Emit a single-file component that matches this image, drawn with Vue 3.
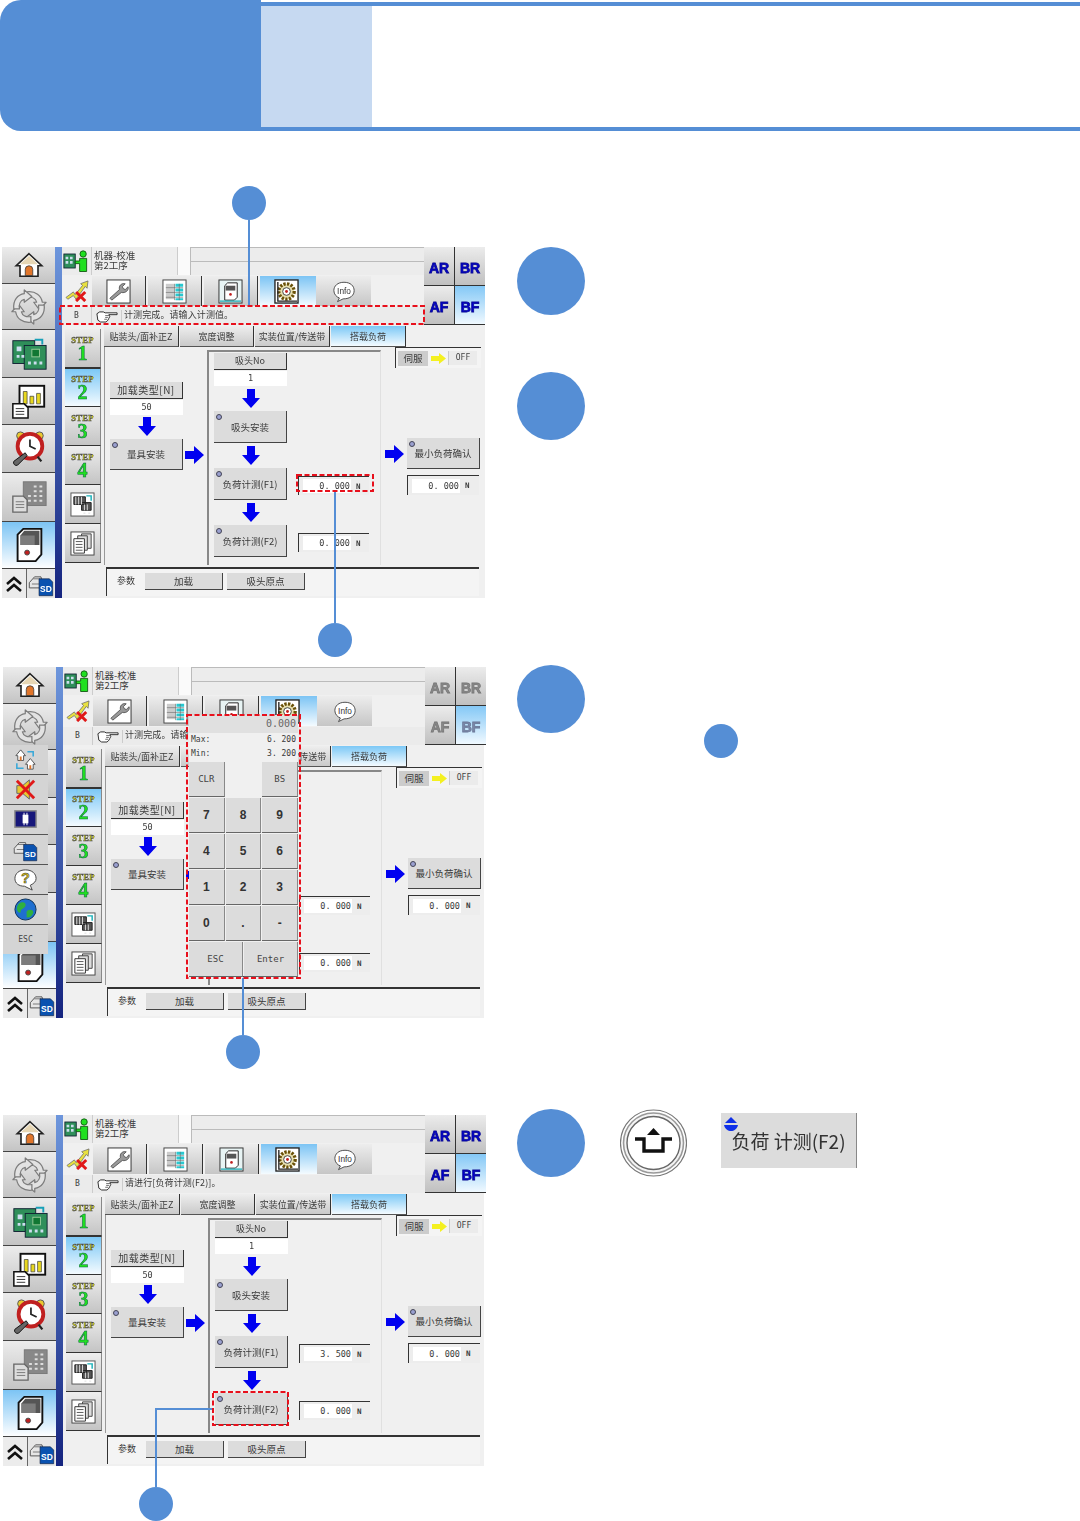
<script setup>
const sideIcons = ['home', 'cycle', 'pcb', 'chart', 'clock', 'grid', 'machine']
const tabs = ['贴装头/面补正Z', '宽度调整', '实装位置/传送带', '搭载负荷']
const steps = [1, 2, 3, 4]
const keys = ['7', '8', '9', '4', '5', '6', '1', '2', '3', '0', '.', '-']
const popup = ['swap', 'mute', 'chip', 'sd', 'help', 'globe']

const screens = [
  { id: 1, msg: '计测完成。请输入计测值。', f1: '0. 000', dim: false, pad: false },
  { id: 2, msg: '计测完成。请输入计测值。', f1: '0. 000', dim: true, pad: true },
  { id: 3, msg: '请进行[负荷计测(F2)]。', f1: '3. 500', dim: false, pad: false },
]

// callouts sit over the whole page, in page coordinates
const dots = [
  [249, 203], [335, 640], [243, 1052], [156, 1504],
]
const leads = [
  'M249 220V306', 'M335 491V623', 'M243 978V1035', 'M213 1409H156V1487',
]
const marks = [
  [60, 306, 364, 18], [297, 475, 76, 16], [187, 715, 113, 263], [213, 1392, 75, 33],
]
</script>

<template>
  <div class="page">
    <svg class="defs" width="0" height="0">
      <defs>
        <symbol id="i-home" viewBox="0 0 40 40">
          <path d="M20 5 37 21H32V35H8V21H3Z" fill="#fff" stroke="#222" stroke-width="2.2" />
          <path d="M20 8 32 19H8Z" fill="#e6d6b4" />
          <path d="M15 34V26a5 5 0 0 1 10 0v8z" fill="#e0752a" stroke="#333" />
        </symbol>
        <symbol id="i-cycle" viewBox="0 0 40 40">
          <g fill="#e2e2e2" stroke="#7c7c7c" stroke-width="1.3" stroke-linejoin="round">
            <path d="M18 4C27 3 33 8 34 15H38L31 23 25 15H28C27 11 23 9 18 10Z" />
            <path d="M18 4C27 3 33 8 34 15H38L31 23 25 15H28C27 11 23 9 18 10Z" transform="rotate(90 20 20)" />
            <path d="M18 4C27 3 33 8 34 15H38L31 23 25 15H28C27 11 23 9 18 10Z" transform="rotate(180 20 20)" />
            <path d="M18 4C27 3 33 8 34 15H38L31 23 25 15H28C27 11 23 9 18 10Z" transform="rotate(270 20 20)" />
          </g>
        </symbol>
        <symbol id="i-pcb" viewBox="0 0 40 40">
          <path d="M26 5H34V10" fill="none" stroke="#18a0b8" stroke-width="2" />
          <rect x="3" y="6" width="23" height="24" fill="#2f8f5a" stroke="#123" />
          <rect x="15" y="11" width="23" height="25" fill="#2f8f5a" stroke="#123" />
          <rect x="23" y="15" width="8" height="8" fill="#173" stroke="#9c9" />
          <path d="M7 12h5v5H7zM7 21h3v3H7zM12 21h3v3h-3zM19 28h3v3h-3zM25 28h3v3h-3zM31 28h3v3h-3z" fill="#cde" />
        </symbol>
        <symbol id="i-chart" viewBox="0 0 40 40">
          <rect x="10" y="4" width="26" height="22" fill="#fff" stroke="#111" stroke-width="2" />
          <path d="M14 10h4v13h-4zM21 15h4v8h-4zM28 12h4v11h-4z" fill="#e8d820" stroke="#333" stroke-width=".7" />
          <path d="M3 23H15L19 27V38H3Z" fill="#fff" stroke="#111" stroke-width="1.6" />
          <path d="M6 28h9M6 31h9M6 34h9" stroke="#333" />
        </symbol>
        <symbol id="i-clock" viewBox="0 0 40 40">
          <circle cx="11" cy="6" r="4" fill="#e8c830" stroke="#555" />
          <circle cx="31" cy="6" r="4" fill="#e8c830" stroke="#555" />
          <circle cx="21" cy="17" r="13" fill="#fff" stroke="#c02020" stroke-width="4" />
          <path d="M21 10V17L27 20" fill="none" stroke="#222" stroke-width="1.8" />
          <path d="M13 28 5 35M29 28 33 33" stroke="#222" stroke-width="2.4" />
          <path d="M16 24 4 33a3 3 0 0 0 4 4L18 27Z" fill="#666" stroke="#111" />
        </symbol>
        <symbol id="i-grid" viewBox="0 0 40 40">
          <rect x="14" y="4" width="24" height="25" fill="#888" stroke="#777" />
          <path d="M25 9h3M31 9h3M25 14h3M31 14h3M19 19h3M25 19h3M31 19h3M19 24h3M25 24h3M31 24h3" stroke="#ddd" stroke-width="2" />
          <path d="M3 19H14L18 23V36H3Z" fill="#ddd" stroke="#666" stroke-width="1.4" />
          <path d="M6 25h9M6 28h9M6 31h9" stroke="#777" />
        </symbol>
        <symbol id="i-machine" viewBox="0 0 40 40">
          <path d="M8 9 14 3H33V30L27 37H8Z" fill="#fff" stroke="#111" stroke-width="2" />
          <path d="M11 10 15 5H31V20H11Z" fill="#555" />
          <path d="M11 10H26V20H11Z" fill="#7c7c7c" />
          <circle cx="18" cy="28" r="2.6" fill="#c02020" stroke="#444" />
        </symbol>
        <symbol id="i-sd" viewBox="0 0 40 40">
          <path d="M2 18 10 9H20L22 18V26H2Z" fill="#e6e6e6" stroke="#555" stroke-width="1.5" />
          <path d="M8 12H19M6 20H18" stroke="#777" stroke-width="1.5" />
          <path d="M17 12H33L38 17V38H17Z" fill="#0a52b0" stroke="#124" />
          <text x="27.5" y="32" class="sd-txt">SD</text>
        </symbol>
        <symbol id="i-person" viewBox="0 0 32 26">
          <rect x="1" y="5" width="13" height="16" fill="#2f8f5a" stroke="#123" />
          <path d="M3 8h3v3H3zM8 8h3v3H8zM3 13h3v3H3zM8 13h3v3H8z" fill="#cde" />
          <circle cx="23" cy="5" r="3.6" fill="#20e020" stroke="#151" />
          <path d="M14 13H19V10H27V25H19V16H14Z" fill="#20e020" stroke="#151" />
        </symbol>
        <symbol id="i-cross" viewBox="0 0 26 24">
          <path d="M1 19 9 13 11 16 19 6 17 4 25 1 24 9 22 7 12 21 9 17 3 21Z" fill="#e8e040" stroke="#666" stroke-width=".8" />
          <path d="M12 13 22 23M22 13 12 23" stroke="#e01818" stroke-width="3.2" />
        </symbol>
        <symbol id="i-wrench" viewBox="0 0 26 26">
          <rect x="1" y="1" width="24" height="24" fill="#fff" stroke="#333" />
          <path d="M6 22 4 20 14 11C13 7 16 4 20 5L17 8 18 10 20 11 23 8C24 12 20 15 16 14Z" fill="#999" stroke="#444" stroke-width=".8" />
        </symbol>
        <symbol id="i-table" viewBox="0 0 26 26">
          <rect x="1" y="1" width="24" height="24" fill="#fff" stroke="#444" />
          <path d="M4 5H13V21H4Z" fill="#ccc" />
          <path d="M14 5H22V8H14ZM14 10H22V13H14ZM14 15H22V18H14ZM14 20H22V22H14Z" fill="#28c8d0" />
          <path d="M4 9H22M4 14H22M4 19H22M13 5V22M18 5V22" stroke="#666" stroke-width=".6" />
        </symbol>
        <symbol id="i-doc" viewBox="0 0 26 26">
          <rect x="1" y="1" width="24" height="24" fill="#e8f4f4" stroke="#333" />
          <path d="M7 7 10 4H20V19L17 22H7Z" fill="#fff" stroke="#222" />
          <path d="M8 7H18V12H8Z" fill="#555" />
          <circle cx="13" cy="16" r="1.4" fill="#c02020" />
          <path d="M2 23H24" stroke="#28b0b8" stroke-width="1.4" />
        </symbol>
        <symbol id="i-gear" viewBox="0 0 26 26">
          <rect x="1" y="1" width="24" height="24" fill="#fff" stroke="#222" stroke-width="1.4" />
          <circle cx="13" cy="13" r="8" fill="#e8e0b0" stroke="#6a5008" stroke-width="3.4" stroke-dasharray="2.4 1.4" />
          <circle cx="13" cy="13" r="4" fill="#fff" stroke="#444" />
          <circle cx="13" cy="13" r="1.5" fill="#c02020" />
          <path d="M4 3V23H24" stroke="#222" stroke-width="1.4" fill="none" />
        </symbol>
        <symbol id="i-info" viewBox="0 0 26 24">
          <path d="M13 2C6 2 2 6 2 11c0 4 3 7 6 8l-2 4 6-3c8 0 12-4 12-9 0-5-4-9-11-9Z" fill="#fff" stroke="#444" />
          <text x="13" y="15" class="info-txt">Info</text>
        </symbol>
        <symbol id="i-hand" viewBox="0 0 24 14">
          <path d="M1 4 4 2H8L10 3H23V5H14L15 7 14 9 13 11 11 13H5L2 11Z" fill="#fff" stroke="#222" stroke-width="1" />
          <path d="M10 6H14M10 8H13M9 10H12" stroke="#222" stroke-width=".7" />
        </symbol>
        <symbol id="i-feeder" viewBox="0 0 26 26">
          <rect x="1" y="1" width="24" height="24" fill="#fff" stroke="#555" />
          <path d="M4 5H16V13H4ZM12 11H22V19H12Z" fill="#555" stroke="#222" />
          <path d="M6 5V13M9 5V13M12 5V13M15 13V19M18 13V19M14 22h2M19 22h2" stroke="#ddd" />
          <path d="M17 4H22V9" fill="none" stroke="#18b0b8" stroke-width="1.5" />
        </symbol>
        <symbol id="i-copy" viewBox="0 0 26 26">
          <rect x="1" y="1" width="24" height="24" fill="#fff" stroke="#444" />
          <path d="M12 3H22V18H12Z" fill="#ddd" stroke="#444" />
          <path d="M8 5H18V20H8Z" fill="#ddd" stroke="#444" />
          <path d="M4 8H15V23H4Z" fill="#fff" stroke="#333" />
          <path d="M6 11H13M6 14H13M6 17H13M6 20H13" stroke="#444" stroke-width=".9" />
        </symbol>
        <symbol id="i-swap" viewBox="0 0 26 26">
          <path d="M3 9 8 3 13 9H11V14H5V9Z" fill="#fff" stroke="#555" />
          <path d="M13 18 18 12 23 18H21V23H15V18Z" fill="#fff" stroke="#555" />
          <path d="M7 10h2v4H7zM17 19h2v4h-2z" fill="#e0752a" />
          <path d="M15 5H21V10M4 17V22H11" fill="none" stroke="#38a8d8" stroke-width="1.6" />
        </symbol>
        <symbol id="i-mute" viewBox="0 0 26 26">
          <path d="M4 9H10L17 3V23L10 17H4Z" fill="#e8c830" stroke="#666" />
          <path d="M4 4 22 22M22 4 4 22" stroke="#e01818" stroke-width="3" />
        </symbol>
        <symbol id="i-chip" viewBox="0 0 26 26">
          <rect x="2" y="4" width="22" height="17" fill="#17177a" stroke="#888" stroke-width="1.5" />
          <rect x="10" y="8" width="6" height="9" fill="#fff" />
          <path d="M11 6h1v13h-1zM14 6h1v13h-1z" fill="#fff" />
        </symbol>
        <symbol id="i-help" viewBox="0 0 26 26">
          <path d="M13 3C6 3 2 7 2 12c0 5 4 8 10 8l8 4-2-5c4-2 6-4 6-7 0-5-4-9-11-9Z" fill="#fff" stroke="#444" />
          <text x="13" y="17" class="help-txt">?</text>
        </symbol>
        <symbol id="i-globe" viewBox="0 0 26 26">
          <circle cx="13" cy="13" r="11" fill="#1f6fd0" stroke="#135" />
          <path d="M6 7C10 4 14 6 13 9 12 12 8 12 8 15 8 18 5 16 4 13 4 10 5 8 6 7ZM15 14C19 12 22 14 21 17 19 21 16 22 14 21 15 18 13 16 15 14Z" fill="#30b040" />
        </symbol>
        <symbol id="i-down" viewBox="0 0 18 19">
          <path d="M5 0H13V9H18L9 19 0 9H5Z" fill="#0000f0" />
        </symbol>
        <symbol id="i-right" viewBox="0 0 19 18">
          <path d="M0 5H9V0L19 9 9 18V13H0Z" fill="#0000f0" />
        </symbol>
        <symbol id="i-yellow" viewBox="0 0 15 11">
          <path d="M0 3H8V0L15 5.5 8 11V8H0Z" fill="#f4f020" />
        </symbol>
      </defs>
    </svg>

    <header class="banner">
      <div class="banner-main"></div>
      <div class="banner-rest">
        <div class="banner-tint"></div>
      </div>
    </header>

    <section v-for="s in screens" :key="s.id" class="row" :class="'row-' + s.id">
      <div class="left">
        <div class="hmi">
          <aside class="side">
            <div v-for="(ic, i) in sideIcons" :key="ic" class="side-btn" :class="{ on: i === 6 }">
              <svg class="side-ic"><use :href="'#i-' + ic" /></svg>
            </div>
            <div class="side-foot">
              <div class="foot-up">
                <svg width="18" height="18" viewBox="0 0 18 18"><path d="M2 9 9 3 16 9M2 16 9 10 16 16" fill="none" stroke="#111" stroke-width="2.6" /></svg>
              </div>
              <div class="foot-sd">
                <svg width="26" height="26"><use href="#i-sd" /></svg>
              </div>
            </div>
          </aside>
          <div class="strip"></div>

          <div class="body">
            <div class="top">
              <div class="top-left">
                <div class="line-a">
                  <div class="person"><svg width="28" height="24"><use href="#i-person" /></svg></div>
                  <div class="title">机器-校准<br />第2工序</div>
                  <div class="spacer"></div>
                  <div class="info"><div></div><div></div></div>
                </div>
                <div class="line-b">
                  <div class="cross"><svg width="24" height="22"><use href="#i-cross" /></svg></div>
                  <div class="tool"><svg width="25" height="25"><use href="#i-wrench" /></svg></div>
                  <div class="tool"><svg width="25" height="25"><use href="#i-table" /></svg></div>
                  <div class="tool"><svg width="25" height="25"><use href="#i-doc" /></svg></div>
                  <div class="tool on"><svg width="25" height="25"><use href="#i-gear" /></svg></div>
                  <div class="tool"><svg width="24" height="23"><use href="#i-info" /></svg></div>
                </div>
                <div class="line-c">
                  <div class="code">B</div>
                  <div class="hand"><svg width="22" height="13"><use href="#i-hand" /></svg></div>
                  <div class="msg">{{ s.msg }}</div>
                </div>
              </div>
              <div class="axes" :class="{ dim: s.dim }">
                <div class="axis">AR</div>
                <div class="axis">BR</div>
                <div class="axis">AF</div>
                <div class="axis on">BF</div>
              </div>
            </div>

            <div class="lower">
              <div class="steps">
                <div v-for="n in steps" :key="n" class="step" :class="{ on: n === 2 }">
                  <span class="step-word">STEP</span>
                  <span class="step-num">{{ n }}</span>
                </div>
                <div class="step"><svg width="25" height="25"><use href="#i-feeder" /></svg></div>
                <div class="step"><svg width="25" height="25"><use href="#i-copy" /></svg></div>
              </div>

              <div class="work">
                <div class="tabs">
                  <div v-for="(t, i) in tabs" :key="t" class="tab" :class="{ on: i === 3 }">{{ t }}</div>
                </div>
                <div class="content">
                  <div class="col-load">
                    <div class="head load-head">加载类型[N]</div>
                    <div class="cell">50</div>
                    <svg class="arrow-v"><use href="#i-down" /></svg>
                    <div class="btn tall"><i class="led"></i>量具安装</div>
                  </div>
                  <svg class="arrow-h link"><use href="#i-right" /></svg>
                  <div class="group">
                    <div class="stack">
                      <div class="head">吸头No</div>
                      <div class="cell">1</div>
                      <svg class="arrow-v"><use href="#i-down" /></svg>
                      <div class="btn"><i class="led"></i>吸头安装</div>
                      <svg class="arrow-v"><use href="#i-down" /></svg>
                      <div class="g-row">
                        <div class="btn"><i class="led"></i>负荷计测(F1)</div>
                        <div class="val"><span class="val-in">{{ s.f1 }}</span><span class="unit">N</span></div>
                      </div>
                      <svg class="arrow-v"><use href="#i-down" /></svg>
                      <div class="g-row">
                        <div class="btn"><i class="led"></i>负荷计测(F2)</div>
                        <div class="val"><span class="val-in">0. 000</span><span class="unit">N</span></div>
                      </div>
                    </div>
                  </div>
                  <div class="col-min">
                    <div class="servo">
                      <span class="servo-tag">伺服</span>
                      <svg width="15" height="11"><use href="#i-yellow" /></svg>
                      <span class="servo-off">OFF</span>
                    </div>
                    <div class="min-row">
                      <svg class="arrow-h"><use href="#i-right" /></svg>
                      <div class="btn tall"><i class="led"></i>最小负荷确认</div>
                    </div>
                    <div class="val min-val"><span class="val-in">0. 000</span><span class="unit">N</span></div>
                  </div>
                </div>
                <div class="bar">
                  <span class="bar-label">参数</span>
                  <div class="bar-btn">加载</div>
                  <div class="bar-btn">吸头原点</div>
                </div>
              </div>
            </div>
          </div>

          <!-- popups over the screen -->
          <div v-if="s.pad" class="popup">
            <div v-for="p in popup" :key="p" class="pop-btn">
              <svg width="25" height="25"><use :href="'#i-' + p" /></svg>
            </div>
            <div class="pop-btn pop-esc">ESC</div>
          </div>
          <div v-if="s.pad" class="pad">
            <div class="pad-show">0.000</div>
            <div class="pad-lim"><span>Max:</span><span>6. 200</span></div>
            <div class="pad-lim"><span>Min:</span><span>3. 200</span></div>
            <div class="pad-keys">
              <div class="key thin wide">CLR</div>
              <div class="key-gap wide"></div>
              <div class="key thin wide">BS</div>
              <div v-for="k in keys" :key="k" class="key wide">{{ k }}</div>
              <div class="key thin half">ESC</div>
              <div class="key thin half">Enter</div>
            </div>
          </div>
        </div>
      </div>

      <div class="right">
        <template v-if="s.id === 1">
          <div class="big-dot"></div>
          <div class="big-dot second"></div>
        </template>
        <div v-else-if="s.id === 2" class="step-line">
          <div class="big-dot"></div>
          <div class="small-dot"></div>
        </div>
        <div v-else class="step-line">
          <div class="big-dot"></div>
          <svg class="shift-key" width="67" height="68" viewBox="0 0 67 68">
            <circle cx="33.5" cy="34" r="33" fill="#fff" stroke="#777" stroke-width="1.2" />
            <circle cx="33.5" cy="34" r="30" fill="#f4f4f4" stroke="#999" stroke-width="1.6" />
            <circle cx="33.5" cy="34" r="26.5" fill="#fff" stroke="#666" stroke-width="1.4" />
            <path d="M15 30H24V42H43V30H52" fill="none" stroke="#111" stroke-width="3.4" />
            <path d="M33.5 19 40 26H27Z" fill="#111" />
          </svg>
          <div class="f2-key">
            <svg class="f2-mark" width="16" height="16" viewBox="0 0 16 16">
              <path d="M8 1 14 7H2Z" fill="#1030e8" />
              <path d="M1 9H15C14 13 11 15 8 15 5 15 2 13 1 9Z" fill="#1030e8" />
            </svg>
            负荷 计测(F2)
          </div>
        </div>
      </div>
    </section>

    <svg class="marks" width="1080" height="1521">
      <path v-for="d in leads" :key="d" :d="d" fill="none" stroke="#558ed5" stroke-width="2" />
      <rect v-for="m in marks" :key="m[1]" :x="m[0]" :y="m[1]" :width="m[2]" :height="m[3]" fill="none" stroke="#e8101c" stroke-width="2" stroke-dasharray="5 2.5" />
      <circle v-for="c in dots" :key="c[1]" :cx="c[0]" :cy="c[1]" r="17" fill="#558ed5" />
    </svg>
  </div>
</template>

<style>
body {
  background: #fff;
}
</style>

<style scoped>
.page {
  position: relative;
  width: 1080px;
  height: 1521px;
  overflow: hidden;
  background: #fff;
  font-family: "Noto Sans CJK SC", "Liberation Sans", sans-serif;
  color: #3a3a3a;
  font-size: 9px;
}
.defs {
  position: absolute;
}
.sd-txt {
  font: bold 13px "Liberation Sans", sans-serif;
  fill: #fff;
  text-anchor: middle;
}
.info-txt {
  font: 9px "Liberation Sans", sans-serif;
  fill: #333;
  text-anchor: middle;
}
.help-txt {
  font: bold 15px "Liberation Sans", sans-serif;
  fill: #d8c020;
  stroke: #333;
  stroke-width: .5px;
  text-anchor: middle;
}
.marks {
  position: absolute;
  top: 0;
  left: 0;
  pointer-events: none;
}

.banner {
  display: flex;
  height: 131px;
}
.banner-main {
  width: 261px;
  background: #558ed5;
  border-radius: 21px 0 0 21px;
}
.banner-rest {
  flex: 1;
  display: flex;
  margin-top: 2px;
  border-top: 4px solid #558ed5;
  border-bottom: 4px solid #558ed5;
}
.banner-tint {
  width: 111px;
  background: #c6d9f1;
}

.row {
  display: flex;
}
.row-1 {
  margin-top: 116px;
  height: 351px;
}
.row-2 {
  margin-top: 67px;
  height: 353px;
}
.row-3 {
  margin-top: 91px;
}
.left {
  width: 517px;
  padding-left: 2px;
  box-sizing: border-box;
}
.row-2 .left {
  padding: 2px 0 0 3px;
}
.row-3 .left {
  padding: 6px 0 0 3px;
}

.hmi {
  position: relative;
  display: grid;
  grid-template-columns: 53px 7px 423px;
  height: 351px;
  width: 483px;
  background: #f0f0f0;
  filter: blur(0.35px);
}
.row-2 .hmi,
.row-3 .hmi {
  grid-template-columns: 53px 7px 421px;
  width: 481px;
}

.side {
  display: grid;
  grid-template-rows: 36px 45px 47px 46px 47px 48px 46px 29px;
  gap: 1px;
  background: #444;
}
.side-btn {
  display: flex;
  align-items: center;
  justify-content: center;
  background: linear-gradient(#ececec, #c4c4c4);
}
.side-btn.on {
  background: linear-gradient(#7cc4f4, #fdfeff);
}
.side-ic {
  width: 38px;
  height: 38px;
}
.side-btn:first-child .side-ic {
  width: 30px;
  height: 30px;
}
.side-foot {
  display: flex;
  gap: 1px;
  background: #666;
}
.foot-up {
  width: 24px;
  display: flex;
  align-items: center;
  justify-content: center;
  background: #ececec;
}
.foot-sd {
  flex: 1;
  display: flex;
  align-items: center;
  justify-content: center;
  background: #e6e6e6;
}
.strip {
  background: linear-gradient(#6d96dc, #15247f);
}

.body {
  display: flex;
  flex-direction: column;
  min-width: 0;
}
.top {
  display: grid;
  grid-template-columns: 362px 1fr;
  height: 77px;
}
.line-a {
  display: flex;
  height: 28px;
  background: #ececec;
}
.person {
  width: 30px;
  display: flex;
  align-items: center;
  justify-content: center;
  border-right: 1px solid #ccc;
  box-sizing: border-box;
}
.title {
  width: 85px;
  padding: 3px 0 0 2px;
  line-height: 10px;
  font-size: 9.5px;
  box-sizing: border-box;
  background: #eeeeee;
}
.spacer {
  width: 13px;
  background: #fafafa;
  border-left: 1px solid #ccc;
  box-sizing: border-box;
}
.info {
  flex: 1;
  display: flex;
  flex-direction: column;
  border-left: 1px solid #bbb;
}
.info div {
  flex: 1;
  border-top: 1px solid #bbb;
}
.line-b {
  display: flex;
  height: 30px;
  margin-top: 1px;
}
.cross {
  width: 30px;
  display: flex;
  align-items: center;
  justify-content: center;
}
.tool {
  width: 54px;
  margin-right: 2px;
  display: flex;
  align-items: center;
  justify-content: center;
  background: linear-gradient(#ededed, #c6c6c6);
  border-right: 1px solid #333;
  box-sizing: border-box;
}
.tool.on {
  margin-right: 0;
  width: 56px;
  padding-right: 4px;
  background: linear-gradient(#7cc4f4, #f4fbff);
  border-right: 0;
}
.tool:last-child {
  width: 55px;
  margin: 0;
  border-right: 0;
}
.line-c {
  display: flex;
  align-items: center;
  height: 18px;
  margin-top: 1px;
  background: #ebebeb;
}
.code {
  width: 30px;
  text-align: center;
  font: 8px "DejaVu Sans Mono", monospace;
  border-right: 1px solid #ccc;
  box-sizing: border-box;
  line-height: 18px;
}
.hand {
  width: 30px;
  display: flex;
  justify-content: center;
  border-right: 1px solid #ccc;
  box-sizing: border-box;
}
.msg {
  margin-top: -3px;
  padding-left: 2px;
  font-size: 9px;
  letter-spacing: .1px;
  white-space: nowrap;
}
.axes {
  display: grid;
  grid-template-columns: 30px 30px;
  grid-template-rows: 38px 38px;
  gap: 1px;
  background: #333;
  align-content: start;
}
.axis {
  display: flex;
  align-items: center;
  justify-content: center;
  padding-top: 3px;
  box-sizing: border-box;
  font: bold 14px "Liberation Sans", sans-serif;
  color: #0000d0;
  -webkit-text-stroke: .8px #0a0a90;
  background: linear-gradient(#ececec, #c0c0c0);
}
.axis.on {
  background: linear-gradient(#84c8f6, #f0f9ff);
}
.axes.dim .axis {
  color: #8a8a8a;
  -webkit-text-stroke: .8px #777;
}
.axes.dim .axis.on {
  color: #7c88a8;
  -webkit-text-stroke: .8px #6a7898;
}

.lower {
  display: flex;
  margin-top: 2px;
  height: 272px;
}
.steps {
  width: 42px;
  padding: 3px 0 0 3px;
  box-sizing: border-box;
  display: flex;
  flex-direction: column;
  flex-shrink: 0;
}
.step {
  width: 36px;
  height: 39px;
  flex-shrink: 0;
  box-sizing: border-box;
  display: flex;
  flex-direction: column;
  align-items: center;
  justify-content: center;
  background: linear-gradient(#eeeeee, #c4c4c4);
  border-bottom: 1px solid #333;
  border-right: 1px solid #888;
}
.step.on {
  background: linear-gradient(#7cc8f6, #f4fbff);
  border-top: 1px solid #333;
}
.step-word {
  font: bold 8.5px/9px "Liberation Serif", serif;
  letter-spacing: .3px;
  color: #e8e800;
  -webkit-text-stroke: .5px #445;
}
.step-num {
  font: bold 20px/16px "Liberation Serif", serif;
  color: #20e020;
  -webkit-text-stroke: .5px #164;
}
.work {
  flex: 1;
  min-width: 0;
  display: flex;
  flex-direction: column;
}
.tabs {
  display: grid;
  grid-template-columns: 75px 74px 75px 75px;
  gap: 1px;
  height: 21px;
}
.tab {
  box-sizing: border-box;
  display: flex;
  align-items: center;
  justify-content: center;
  white-space: nowrap;
  font-size: 9px;
  background: linear-gradient(#eeeeee, #cacaca);
  border-right: 1px solid #333;
  border-bottom: 1px solid #555;
}
.tab.on {
  background: linear-gradient(#7cc8f6, #f4fbff);
}
.content {
  display: flex;
  height: 218px;
  padding-left: 5px;
  border-left: 1px solid #999;
  box-sizing: border-box;
}
.col-load {
  width: 73px;
  padding-top: 35px;
  display: flex;
  flex-direction: column;
  align-items: center;
  flex-shrink: 0;
}
.col-load .arrow-v {
  margin-top: 2px;
}
.head {
  width: 73px;
  height: 17px;
  line-height: 16px;
  text-align: center;
  box-sizing: border-box;
  background: #dcdcdc;
  border-right: 1px solid #333;
  border-bottom: 1px solid #333;
}
.load-head {
  font-size: 10px;
  letter-spacing: .5px;
  white-space: nowrap;
}
.cell {
  width: 73px;
  height: 15px;
  margin-top: 1px;
  line-height: 14px;
  text-align: center;
  background: #fff;
  font-family: "DejaVu Sans Mono", monospace;
  font-size: 8.5px;
}
.arrow-v {
  width: 18px;
  height: 19px;
  margin: 3px 0;
  flex-shrink: 0;
}
.arrow-h {
  width: 19px;
  height: 18px;
  flex-shrink: 0;
}
.link {
  margin: 99px 0 0 2px;
  width: 19px;
}
.btn {
  position: relative;
  width: 73px;
  height: 32px;
  display: flex;
  align-items: center;
  justify-content: center;
  box-sizing: border-box;
  white-space: nowrap;
  font-size: 9.5px;
  background: #dcdcdc;
  border-right: 1px solid #444;
  border-bottom: 1px solid #444;
}
.btn.tall {
  height: 31px;
  flex-shrink: 0;
}
.led {
  position: absolute;
  top: 3px;
  left: 2px;
  width: 6px;
  height: 6px;
  box-sizing: border-box;
  border-radius: 50%;
  background: #9aa0d0;
  border: 1px solid #445;
}
.group {
  width: 174px;
  height: 215px;
  margin: 3px 0 0 3px;
  padding: 1px 0 0 5px;
  box-sizing: border-box;
  flex-shrink: 0;
  border-top: 2px solid #888;
  border-left: 2px solid #888;
  border-right: 1px solid #e0e0e0;
}
.stack {
  display: flex;
  flex-direction: column;
  align-items: flex-start;
  width: 73px;
}
.stack .arrow-v {
  align-self: center;
}
.g-row {
  display: flex;
  align-items: center;
  gap: 11px;
}
.val {
  display: flex;
  align-items: center;
  width: 71px;
  height: 19px;
  flex-shrink: 0;
  padding-left: 4px;
  box-sizing: border-box;
  border-top: 1px solid #333;
  border-left: 1px solid #333;
  background: #ededed;
}
.g-row .val {
  margin-top: 3px;
}
.val-in {
  width: 48px;
  height: 14px;
  line-height: 14px;
  text-align: right;
  padding-right: 1px;
  box-sizing: border-box;
  background: #fff;
  font: 8.5px/14px "DejaVu Sans Mono", monospace;
}
.unit {
  margin-left: 5px;
  font: bold 7.5px "DejaVu Sans Mono", monospace;
}
.col-min {
  display: flex;
  flex-direction: column;
  margin-left: 4px;
  flex-shrink: 0;
}
.servo {
  display: flex;
  align-items: center;
  gap: 3px;
  width: 86px;
  height: 21px;
  margin: 0 0 0 10px;
  padding-left: 2px;
  box-sizing: border-box;
  border-top: 1px solid #333;
  border-left: 1px solid #333;
  background: #f4f4f4;
}
.servo-tag {
  width: 30px;
  height: 15px;
  line-height: 14px;
  font-size: 9.5px;
  text-align: center;
  background: #ccc;
}
.servo-off {
  width: 28px;
  height: 14px;
  margin-left: -1px;
  font: 8px/14px "DejaVu Sans Mono", monospace;
  text-align: center;
  background: #ebebeb;
  border-left: 1px solid #ccc;
  color: #444;
}
.min-row {
  display: flex;
  align-items: center;
  gap: 3px;
  margin-top: 70px;
}
.min-row .btn {
  white-space: nowrap;
  font-size: 9.5px;
}
.min-val {
  margin: 6px 0 0 22px;
  width: 72px;
  height: 20px;
}
.bar {
  display: flex;
  margin: 2px 0 0 2px;
  width: 373px;
  height: 29px;
  box-sizing: border-box;
  border-top: 2px solid #333;
  border-left: 1px solid #333;
  background: #f4f4f4;
  gap: 4px;
}
.bar-label {
  width: 34px;
  padding: 5px 0 0 10px;
  box-sizing: border-box;
  white-space: nowrap;
}
.bar-btn {
  width: 78px;
  height: 17px;
  margin-top: 4px;
  line-height: 16px;
  text-align: center;
  font-size: 9.5px;
  background: #dcdcdc;
  box-sizing: border-box;
  border-right: 1px solid #444;
  border-bottom: 1px solid #444;
}

.popup {
  position: absolute;
  top: 78px;
  left: 0;
  width: 45px;
  display: flex;
  flex-direction: column;
  background: #555;
  gap: 1px;
}
.pop-btn {
  height: 29px;
  display: flex;
  align-items: center;
  justify-content: center;
  background: #d4d4d4;
}
.pop-esc {
  font: 8px "DejaVu Sans Mono", monospace;
  color: #444;
}
.pad {
  position: absolute;
  top: 48px;
  left: 186px;
  width: 109px;
  height: 261px;
  background: #f0f0f0;
}
.pad-show {
  height: 18px;
  text-align: right;
  padding-right: 2px;
  background: #e0e0e0;
  font: 10px/18px "DejaVu Sans Mono", monospace;
  color: #666;
}
.pad-lim {
  display: flex;
  justify-content: space-between;
  height: 14px;
  padding: 0 2px;
  font: 8px/14px "DejaVu Sans Mono", monospace;
  background: #f0f0f0;
}
.pad-keys {
  display: grid;
  grid-template-columns: repeat(6, 1fr);
  grid-auto-rows: 35px;
  gap: 1px;
  margin-top: 1px;
}
.wide {
  grid-column: span 2;
}
.half {
  grid-column: span 3;
}
.key {
  display: flex;
  align-items: center;
  justify-content: center;
  background: #dcdcdc;
  border-right: 1px solid #888;
  border-bottom: 1px solid #666;
  box-sizing: border-box;
  font: bold 12px "Liberation Sans", sans-serif;
  color: #333;
}
.key.thin {
  font: 9px "DejaVu Sans Mono", monospace;
  color: #444;
}

.right {
  display: flex;
  flex-direction: column;
}
.big-dot {
  width: 68px;
  height: 68px;
  flex-shrink: 0;
  border-radius: 50%;
  background: #558ed5;
}
.second {
  margin-top: 57px;
}
.step-line {
  display: flex;
  align-items: flex-start;
}
.small-dot {
  width: 34px;
  height: 34px;
  margin: 59px 0 0 119px;
  border-radius: 50%;
  background: #558ed5;
}
.shift-key {
  margin-left: 35px;
}
.f2-key {
  position: relative;
  display: flex;
  align-items: center;
  justify-content: center;
  width: 136px;
  height: 55px;
  margin: 4px 0 0 34px;
  box-sizing: border-box;
  background: #dcdcdc;
  border-right: 1px solid #888;
  font-size: 19px;
  color: #333;
  filter: blur(0.4px);
}
.f2-mark {
  position: absolute;
  top: 3px;
  left: 2px;
}
</style>
